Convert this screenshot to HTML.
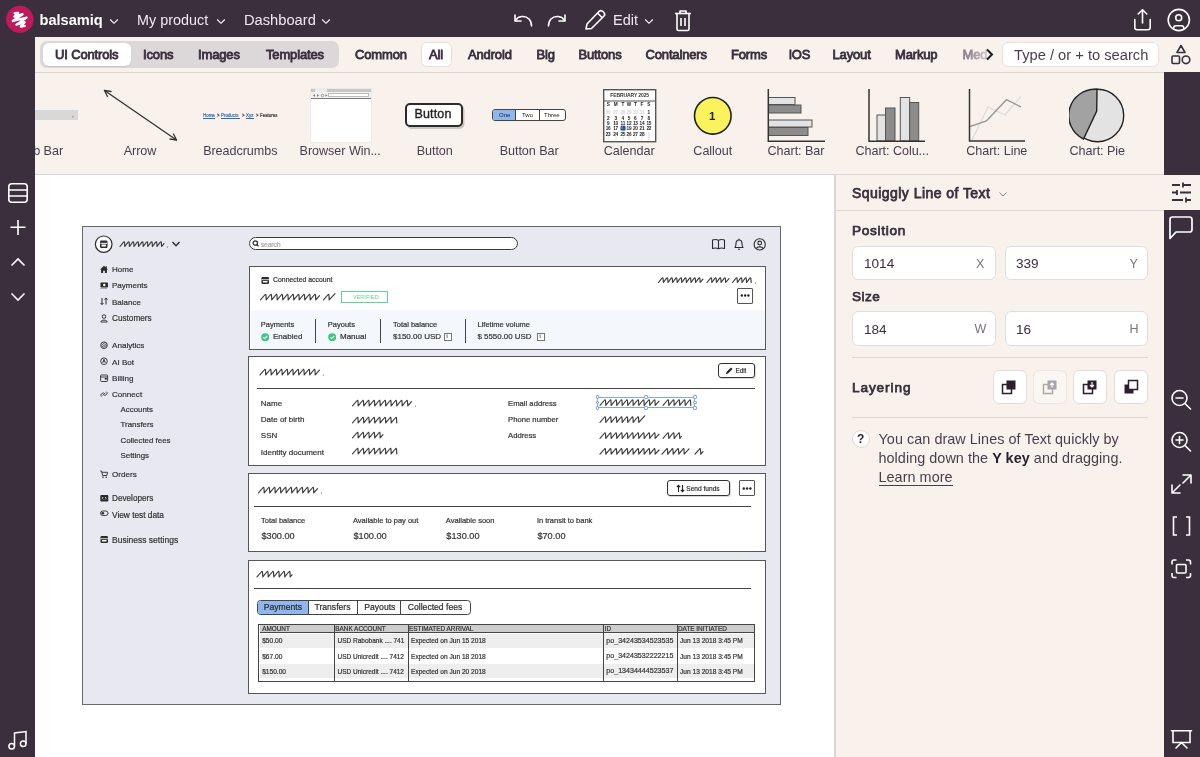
<!DOCTYPE html>
<html><head><meta charset="utf-8">
<style>
*{margin:0;padding:0;box-sizing:border-box}
html,body{width:1200px;height:757px;overflow:hidden;background:#fff;font-family:"Liberation Sans",sans-serif}
.a{position:absolute}
.t{position:absolute;white-space:nowrap;line-height:1}
#top{left:0;top:0;width:1200px;height:37px;background:#3b2e3d}
#lside{left:0;top:37px;width:35px;height:720px;background:#3b2e3d}
#rside{left:1164px;top:72px;width:36px;height:685px;background:#3b2e3d}
#tools{left:35px;top:37px;width:1165px;height:36px;background:#f9f2ec;border-bottom:1px solid #dcd6d6}
#lib{left:35px;top:73px;width:1129px;height:102px;background:#f9f2ec;border-bottom:1px solid #dcd6d6}
#canvas{left:35px;top:175px;width:799px;height:582px;background:#fff}
#panel{left:834px;top:175px;width:330px;height:582px;background:#f9f2ec;border-left:2px solid #dcd4dc}
.wt{color:#fff}
.tb{color:#3b2e3d;font-weight:normal;font-size:13px;letter-spacing:-0.15px;-webkit-text-stroke:0.8px #3b2e3d}
.lbl{color:#4a3c4d;font-size:12.6px;letter-spacing:-0.05px}
.inp{position:absolute;background:#fff;border:1px solid #e4dcdc;border-radius:6px}
.lb{position:absolute;background:#fff;border:1px solid #e4dcdc;border-radius:6px;width:34px;height:34px}
.sep{position:absolute;height:1px;background:#ddd6d6}
.w{position:absolute;white-space:nowrap;line-height:1;-webkit-text-stroke:0.2px currentColor}
</style></head><body><div id="root" style="position:absolute;left:0;top:0;width:1200px;height:757px;will-change:transform">
<div id="top" class="a"></div>
<div id="lside" class="a"></div>
<div id="tools" class="a"></div>
<div id="lib" class="a"></div>
<div id="rside" class="a"></div>
<div id="canvas" class="a"></div>
<div id="panel" class="a"></div>

<!-- TOPBAR -->
<svg class="a" style="left:0;top:0" width="40" height="40" viewBox="0 0 40 40"><circle cx="19.8" cy="19.4" r="13.7" fill="#be1a5c"/><path d="M14.6 13.2 L18.2 12.8 L14.4 16.6 L22.6 14.2 L12.8 21 L26.6 17.6 L16.4 24.6 L24.6 22.2 L20.8 26.6 L24.8 25.8" stroke="#fff" stroke-width="2.3" fill="none" stroke-linecap="round" stroke-linejoin="round"/></svg>
<div class="t wt" style="left:39.5px;top:12.8px;font-size:14.6px;font-weight:bold">balsamiq</div>
<svg class="a" style="left:109px;top:18px" width="10" height="7" viewBox="0 0 10 7"><path d="M1.2 1.5 L5 5.3 L8.8 1.5" stroke="#fff" stroke-width="1.1" fill="none"/></svg>
<div class="t wt" style="left:137px;top:13px;font-size:14.4px;color:#efe9ee">My product</div>
<svg class="a" style="left:216px;top:18px" width="10" height="7" viewBox="0 0 10 7"><path d="M1.2 1.5 L5 5.3 L8.8 1.5" stroke="#fff" stroke-width="1.1" fill="none"/></svg>
<div class="t wt" style="left:244px;top:12.8px;font-size:14.7px;color:#efe9ee">Dashboard</div>
<svg class="a" style="left:321px;top:18px" width="10" height="7" viewBox="0 0 10 7"><path d="M1.2 1.5 L5 5.3 L8.8 1.5" stroke="#fff" stroke-width="1.1" fill="none"/></svg>

<!-- undo/redo/edit/trash -->
<svg class="a" style="left:511.5px;top:10.5px" width="22" height="20" viewBox="0 0 22 20"><g stroke="#fff" stroke-width="1.6" fill="none" stroke-linecap="round" stroke-linejoin="round"><path d="M3 4 L3 10 L9 10"/><path d="M3.5 9.5 C6 5 13 4 17 8 C19 10 19.5 12 19.5 15"/></g></svg>
<svg class="a" style="left:546px;top:10.5px" width="22" height="20" viewBox="0 0 22 20"><g stroke="#fff" stroke-width="1.6" fill="none" stroke-linecap="round" stroke-linejoin="round"><path d="M19 4 L19 10 L13 10"/><path d="M18.5 9.5 C16 5 9 4 5 8 C3 10 2.5 12 2.5 15"/></g></svg>
<svg class="a" style="left:583px;top:8px" width="24" height="24" viewBox="0 0 24 24"><g stroke="#fff" stroke-width="1.6" fill="none" stroke-linejoin="round"><path d="M3 21 L4 16 L16 3.5 C17 2.5 19 2.5 20.5 4 C22 5.5 22 7 21 8 L8.5 20.5 Z"/><path d="M14.5 5 L19.5 10"/></g></svg>
<div class="t wt" style="left:613px;top:13px;font-size:14.5px;color:#efe9ee">Edit</div>
<svg class="a" style="left:644px;top:18px" width="10" height="7" viewBox="0 0 10 7"><path d="M1.2 1.5 L5 5.3 L8.8 1.5" stroke="#fff" stroke-width="1.1" fill="none"/></svg>
<svg class="a" style="left:673px;top:8px" width="20" height="24" viewBox="0 0 20 24"><g stroke="#fff" stroke-width="1.6" fill="none" stroke-linejoin="round"><path d="M2 5.5 H18"/><path d="M7 5.5 V3 H13 V5.5"/><path d="M4 5.5 V21 C4 22 4.5 22.5 5.5 22.5 H14.5 C15.5 22.5 16 22 16 21 V5.5"/><path d="M8 10 V18 M12 10 V18"/></g></svg>
<!-- share, account -->
<svg class="a" style="left:1131px;top:7px" width="22" height="24" viewBox="0 0 22 24"><g stroke="#fff" stroke-width="1.6" fill="none" stroke-linecap="round" stroke-linejoin="round"><path d="M11.5 3 V16"/><path d="M7.2 7 L11.5 2.8 L15.8 7"/><path d="M3.8 12.5 V20.5 Q3.8 22.7 6 22.7 H17 Q19.2 22.7 19.2 20.5 V12.5"/></g></svg>
<svg class="a" style="left:1167px;top:8px" width="24" height="24" viewBox="0 0 24 24"><defs><clipPath id="acc"><circle cx="11.8" cy="12" r="10.6"/></clipPath></defs><g stroke="#fff" stroke-width="1.6" fill="none"><circle cx="11.8" cy="12" r="10.6"/><circle cx="11.7" cy="9.7" r="3"/><rect x="6.6" y="17.8" width="10.2" height="5" rx="2.3" clip-path="url(#acc)"/></g></svg>

<!-- TOOLBAR -->
<div class="a" style="left:39.5px;top:41px;width:299px;height:26.5px;background:#dcd7d9;border-radius:7px"></div>
<div class="a" style="left:43px;top:43px;width:88px;height:23px;background:#fff;border-radius:6px;box-shadow:0 1px 1px rgba(0,0,0,0.08)"></div>
<div class="t tb" style="left:55px;top:48px">UI Controls</div>
<div class="t tb" style="left:143px;top:48px">Icons</div>
<div class="t tb" style="left:198px;top:48px">Images</div>
<div class="t tb" style="left:266px;top:48px">Templates</div>
<div class="t tb" style="left:355px;top:48px">Common</div>
<div class="a" style="left:421px;top:41.5px;width:31px;height:25.5px;background:#fff;border:1px solid #e6dede;border-radius:6px"></div>
<div class="t tb" style="left:429px;top:48px">All</div>
<div class="t tb" style="left:468px;top:48px">Android</div>
<div class="t tb" style="left:536.5px;top:48px">Big</div>
<div class="t tb" style="left:578.5px;top:48px">Buttons</div>
<div class="t tb" style="left:645.5px;top:48px">Containers</div>
<div class="t tb" style="left:731px;top:48px">Forms</div>
<div class="t tb" style="left:789px;top:48px">iOS</div>
<div class="t tb" style="left:832.5px;top:48px">Layout</div>
<div class="t tb" style="left:895px;top:48px">Markup</div>
<div class="t tb" style="left:962.5px;top:48px;color:#8f8790;-webkit-text-stroke-color:#8f8790;-webkit-mask-image:linear-gradient(to right,#000 30%,rgba(0,0,0,0.35) 100%)">Med</div>
<svg class="a" style="left:984.5px;top:48px" width="9" height="13" viewBox="0 0 9 13"><path d="M2 1.5 L7 6.5 L2 11.5" stroke="#1a1a1a" stroke-width="2" fill="none"/></svg>
<div class="a" style="left:1001.5px;top:42px;width:157.5px;height:25px;background:#fff;border:1px solid #e8e0e0;border-radius:6px"></div>
<div class="t" style="left:1014px;top:47.6px;font-size:14.7px;color:#4b3d4e">Type / or + to search</div>
<svg class="a" style="left:1170px;top:44px" width="22" height="21" viewBox="0 0 22 21"><g stroke="#3b2e3d" stroke-width="1.6" fill="none" stroke-linejoin="round"><path d="M11 1.5 L15 8.5 H7 Z"/><rect x="2" y="12" width="7.5" height="7.5" rx="1"/><circle cx="16" cy="15.8" r="3.8"/></g></svg>

<!-- LIBRARY -->
<div class="a" style="left:35px;top:73px;width:1129px;height:100px;overflow:hidden">
 <div class="a" style="left:-10px;top:37px;width:53px;height:10px;background:#d9d8d8"></div>
 <div class="t" style="left:37px;top:39.5px;font-size:6px;color:#666">‹</div>
 <div class="t lbl" style="left:-15px;top:72px">Tab Bar</div>
</div>
<svg class="a" style="left:100px;top:86px" width="82" height="58" viewBox="0 0 82 58"><g stroke="#333" stroke-width="1.3" fill="none" stroke-linecap="round"><path d="M4.5 4.5 L76.5 54"/><path d="M4.5 4.5 L11 5.5 M4.5 4.5 L7.5 10.5"/><path d="M76.5 54 L70 53 M76.5 54 L73.5 48"/></g></svg>
<div class="t lbl" style="left:70.0px;top:145px;width:140px;text-align:center">Arrow</div>
<div class="t" style="left:203.1px;top:112.8px;transform:scaleX(0.82);transform-origin:0 0;width:11.8px;font-size:5.3px;color:#2e6ab5;-webkit-text-stroke:0.2px #2e6ab5;letter-spacing:0.05px">Home</div><div class="a" style="left:203.1px;top:117.6px;width:11.8px;height:0.7px;background:#2e6ab5"></div><div class="t" style="left:216.8px;top:112.8px;transform:scaleX(0.82);transform-origin:0 0;width:4px;font-size:5.3px;color:#333;-webkit-text-stroke:0.2px #333;letter-spacing:0.05px">&gt;</div><div class="t" style="left:220.9px;top:112.8px;transform:scaleX(0.82);transform-origin:0 0;width:18.7px;font-size:5.3px;color:#2e6ab5;-webkit-text-stroke:0.2px #2e6ab5;letter-spacing:0.05px">Products</div><div class="a" style="left:220.9px;top:117.6px;width:18.7px;height:0.7px;background:#2e6ab5"></div><div class="t" style="left:242px;top:112.8px;transform:scaleX(0.82);transform-origin:0 0;width:4px;font-size:5.3px;color:#333;-webkit-text-stroke:0.2px #333;letter-spacing:0.05px">&gt;</div><div class="t" style="left:245.6px;top:112.8px;transform:scaleX(0.82);transform-origin:0 0;width:8px;font-size:5.3px;color:#2e6ab5;-webkit-text-stroke:0.2px #2e6ab5;letter-spacing:0.05px">Xyz</div><div class="a" style="left:245.6px;top:117.6px;width:8px;height:0.7px;background:#2e6ab5"></div><div class="t" style="left:255.8px;top:112.8px;transform:scaleX(0.82);transform-origin:0 0;width:4px;font-size:5.3px;color:#333;-webkit-text-stroke:0.2px #333;letter-spacing:0.05px">&gt;</div><div class="t" style="left:259.5px;top:112.8px;transform:scaleX(0.82);transform-origin:0 0;width:20px;font-size:5.3px;color:#333;-webkit-text-stroke:0.2px #333;letter-spacing:0.05px">Features</div>
<div class="t lbl" style="left:170.3px;top:145px;width:140px;text-align:center">Breadcrumbs</div>
<div class="a" style="left:311px;top:88.7px;width:60px;height:53.7px;background:#fff;box-shadow:0 0 0 0.5px #e4e0dc"></div>
<div class="a" style="left:311px;top:88.7px;width:60px;height:3.6px;background:#c6c6c6"></div>
<div class="a" style="left:315px;top:89.2px;width:11.5px;height:3.1px;background:#ececec"></div>
<div class="a" style="left:311px;top:92.3px;width:60px;height:6px;background:#f1f1f1"></div>
<div class="a" style="left:327.5px;top:93.2px;width:41.5px;height:4px;background:#fff;border:0.6px solid #bbb"></div>
<svg class="a" style="left:312px;top:93px" width="16" height="5" viewBox="0 0 16 5"><g fill="#777"><path d="M1 2.5 L3 1 V4 Z"/><path d="M7 2.5 L5 1 V4 Z"/><circle cx="10.5" cy="2.5" r="1.3" fill="none" stroke="#777" stroke-width="0.6"/><path d="M13.5 1.2 L15.5 2.5 L13.5 3.8 Z"/></g></svg>
<div class="a" style="left:311px;top:98.2px;width:60px;height:0.9px;background:#7a7a7a"></div>
<div class="t lbl" style="left:270.2px;top:145px;width:140px;text-align:center">Browser Win...</div>
<div class="a" style="left:405px;top:103px;width:57.5px;height:23.5px;background:#fff;border:2px solid #2b2b2b;border-radius:5px;box-shadow:1.5px 2px 0 rgba(0,0,0,0.18)"></div>
<div class="t" style="left:414.5px;top:107.8px;font-size:12.5px;color:#222;letter-spacing:0.15px;-webkit-text-stroke:0.35px #222">Button</div>
<div class="t lbl" style="left:364.7px;top:145px;width:140px;text-align:center">Button</div>
<div class="a" style="left:492px;top:109px;width:73.5px;height:12px;background:#fff;border:1px solid #444;border-radius:3px;overflow:hidden">
 <div class="a" style="left:0;top:0;width:23px;height:10px;background:#8fb6ee;border-right:1px solid #444"></div>
 <div class="a" style="left:45.5px;top:0;width:1px;height:10px;background:#444"></div>
 <div class="t" style="left:6px;top:2px;font-size:6px;color:#222">One</div>
 <div class="t" style="left:29px;top:2px;font-size:6px;color:#222">Two</div>
 <div class="t" style="left:51px;top:2px;font-size:6px;color:#222">Three</div>
</div>
<div class="t lbl" style="left:459.2px;top:145px;width:140px;text-align:center">Button Bar</div>
<svg class="a" style="left:603px;top:88.5px" width="54" height="54" viewBox="0 0 54 54"><rect x="0.7" y="0.7" width="52" height="52" fill="#fff" stroke="#555" stroke-width="1.4"/><path d="M0.7 12 H52.7" stroke="#555" stroke-width="1.2"/><text x="26.7" y="8.2" font-size="5" text-anchor="middle" fill="#333" font-family="Liberation Sans" font-weight="bold" letter-spacing="-0.1">FEBRUARY 2025</text><g font-size="4.7" fill="#222" font-family="Liberation Sans" font-weight="bold" text-anchor="middle" letter-spacing="-0.2"><text x="5.1" y="17">S</text><text x="12.6" y="17">M</text><text x="19.8" y="17">T</text><text x="25.9" y="17">W</text><text x="32.3" y="17">T</text><text x="38.9" y="17">F</text><text x="45.8" y="17">S</text><text x="5.1" y="25.3" fill="#d4d4d4">26</text><text x="12.6" y="25.3" fill="#d4d4d4">27</text><text x="19.8" y="25.3" fill="#d4d4d4">28</text><text x="25.9" y="25.3" fill="#d4d4d4">29</text><text x="32.3" y="25.3" fill="#d4d4d4">30</text><text x="38.9" y="25.3" fill="#d4d4d4">31</text><text x="45.8" y="25.3">1</text><text x="5.1" y="30.8">2</text><text x="12.6" y="30.8">3</text><text x="19.8" y="30.8">4</text><text x="25.9" y="30.8">5</text><text x="32.3" y="30.8">6</text><text x="38.9" y="30.8">7</text><text x="45.8" y="30.8">8</text><text x="5.1" y="36.1">9</text><text x="12.6" y="36.1">10</text><text x="19.8" y="36.1">11</text><text x="25.9" y="36.1">12</text><text x="32.3" y="36.1">13</text><text x="38.9" y="36.1">14</text><text x="45.8" y="36.1">15</text><circle cx="20.1" cy="39.3" r="3.1" fill="#7aa8e6"/><text x="5.1" y="41.1">16</text><text x="12.6" y="41.1">17</text><text x="19.8" y="41.1">18</text><text x="25.9" y="41.1">19</text><text x="32.3" y="41.1">20</text><text x="38.9" y="41.1">21</text><text x="45.8" y="41.1">22</text><text x="5.1" y="46.5">23</text><text x="12.6" y="46.5">24</text><text x="19.8" y="46.5">25</text><text x="25.9" y="46.5">26</text><text x="32.3" y="46.5">27</text><text x="38.9" y="46.5">28</text><text x="45.8" y="46.5" fill="#d4d4d4">1</text><text x="5.1" y="51" fill="#e6e6e6">2</text><text x="12.6" y="51" fill="#e6e6e6">3</text><text x="19.8" y="51" fill="#e6e6e6">4</text><text x="25.9" y="51" fill="#e6e6e6">5</text><text x="32.3" y="51" fill="#e6e6e6">6</text><text x="38.9" y="51" fill="#e6e6e6">7</text><text x="45.8" y="51" fill="#e6e6e6">8</text></g></svg>
<div class="t lbl" style="left:559.2px;top:145px;width:140px;text-align:center">Calendar</div>
<svg class="a" style="left:692px;top:95px" width="42" height="42" viewBox="0 0 42 42"><circle cx="20.8" cy="20.8" r="18.3" fill="#fbf35b" stroke="#222" stroke-width="1.6"/><text x="20.3" y="25" font-size="11.5" text-anchor="middle" fill="#222" font-family="Liberation Sans" font-weight="bold">1</text></svg>
<div class="t lbl" style="left:642.8px;top:145px;width:140px;text-align:center">Callout</div>
<svg class="a" style="left:766px;top:88px" width="62" height="56" viewBox="0 0 62 56"><g stroke="#555" stroke-width="1">
<rect x="2.5" y="9.5" width="26.5" height="7" fill="#e3e3e3"/>
<rect x="2.5" y="17" width="32.5" height="8" fill="#8c8c8c"/>
<rect x="2.5" y="32" width="43.5" height="7" fill="#e3e3e3"/>
<rect x="2.5" y="39.5" width="39.5" height="8" fill="#8c8c8c"/></g>
<path d="M2.3 1 V53.3 H59" stroke="#333" stroke-width="1.5" fill="none"/></svg>
<div class="t lbl" style="left:726.0px;top:145px;width:140px;text-align:center">Chart: Bar</div>
<svg class="a" style="left:866px;top:88px" width="62" height="56" viewBox="0 0 62 56"><g stroke="#555" stroke-width="1">
<rect x="11" y="27" width="8.5" height="26" fill="#e3e3e3"/>
<rect x="19.5" y="20" width="9.5" height="33" fill="#8c8c8c"/>
<rect x="34.3" y="9.5" width="9.4" height="43.5" fill="#e3e3e3"/>
<rect x="43.7" y="14.5" width="9" height="38.5" fill="#8c8c8c"/></g>
<path d="M3 1 V53.3 H59" stroke="#333" stroke-width="1.5" fill="none"/></svg>
<div class="t lbl" style="left:822.2px;top:145px;width:140px;text-align:center">Chart: Colu...</div>
<svg class="a" style="left:966px;top:88px" width="62" height="56" viewBox="0 0 62 56">
<path d="M6 52 L22 19 L39 27 L55 8.5" stroke="#dcdcdc" stroke-width="1.3" fill="none"/>
<path d="M4 38.5 L20.5 32.8 L40.5 11.7 L55 19" stroke="#9a9a9a" stroke-width="1.4" fill="none"/>
<path d="M3.5 1 V53 H59" stroke="#333" stroke-width="1.5" fill="none"/></svg>
<div class="t lbl" style="left:926.8px;top:145px;width:140px;text-align:center">Chart: Line</div>
<svg class="a" style="left:1069px;top:87px" width="57" height="57" viewBox="0 0 57 57"><circle cx="28.5" cy="28.5" r="26.2" fill="#e3e3e3" stroke="#222" stroke-width="1.4"/><path d="M28 2.3 L27.7 24 L14.5 52 A26.2 26.2 0 0 1 28 2.3 Z" fill="#a2a2a2" stroke="#222" stroke-width="1.4"/></svg>
<div class="t lbl" style="left:1027.3px;top:145px;width:140px;text-align:center">Chart: Pie</div>

<!-- PANEL -->
<div class="a" style="left:1164px;top:175px;width:36px;height:35px;background:#f9f2ec"></div>
<div class="sep" style="left:836px;top:209.5px;width:328px"></div>
<div class="t" style="left:852px;top:185.8px;font-size:14px;color:#3b2e3d;letter-spacing:0.45px;-webkit-text-stroke:0.75px #3b2e3d">Squiggly Line of Text</div>
<svg class="a" style="left:998px;top:190px" width="10" height="8" viewBox="0 0 10 8"><path d="M1.5 2.5 L5 6 L8.5 2.5" stroke="#8a8089" stroke-width="1" fill="none"/></svg>
<div class="t" style="left:852px;top:224px;font-size:13.6px;color:#3b2e3d;letter-spacing:0.7px;-webkit-text-stroke:0.75px #3b2e3d">Position</div>
<div class="inp" style="left:851.5px;top:245.5px;width:144px;height:34.5px"></div>
<div class="inp" style="left:1004.5px;top:245.5px;width:143.5px;height:34.5px"></div>
<div class="t" style="left:864px;top:257px;font-size:13.6px;color:#3b2e3d">1014</div>
<div class="t" style="left:976px;top:257.5px;font-size:12.5px;color:#7b707c">X</div>
<div class="t" style="left:1016px;top:257px;font-size:13.6px;color:#3b2e3d">339</div>
<div class="t" style="left:1129.5px;top:257.5px;font-size:12.5px;color:#7b707c">Y</div>
<div class="t" style="left:852px;top:289.8px;font-size:13.6px;color:#3b2e3d;letter-spacing:0.45px;-webkit-text-stroke:0.75px #3b2e3d">Size</div>
<div class="inp" style="left:851.5px;top:311px;width:144px;height:34.5px"></div>
<div class="inp" style="left:1004.5px;top:311px;width:143.5px;height:34.5px"></div>
<div class="t" style="left:864px;top:322.8px;font-size:13.6px;color:#3b2e3d">184</div>
<div class="t" style="left:974.5px;top:323px;font-size:12.5px;color:#7b707c">W</div>
<div class="t" style="left:1016px;top:322.8px;font-size:13.6px;color:#3b2e3d">16</div>
<div class="t" style="left:1129.5px;top:323px;font-size:12.5px;color:#7b707c">H</div>
<div class="sep" style="left:851.5px;top:357px;width:296.5px"></div>
<div class="t" style="left:852px;top:380.8px;font-size:13.6px;color:#3b2e3d;letter-spacing:0.9px;-webkit-text-stroke:0.75px #3b2e3d">Layering</div>
<div class="lb" style="left:992.5px;top:370.3px"></div>
<div class="lb" style="left:1033.3px;top:370.3px;background:#faf6f2;border-color:#ece6e4"></div>
<div class="lb" style="left:1073.3px;top:370.3px"></div>
<div class="lb" style="left:1114.2px;top:370.3px"></div>
<svg class="a" style="left:1001px;top:379px" width="17" height="17" viewBox="0 0 17 17"><rect x="1.5" y="5.5" width="9" height="9" fill="#fff" stroke="#2a1f2c" stroke-width="1.5"/><rect x="5.5" y="1.5" width="9" height="9" fill="#2a1f2c"/></svg>
<svg class="a" style="left:1041.5px;top:379px" width="17" height="17" viewBox="0 0 17 17"><rect x="1.5" y="5.5" width="9" height="9" fill="none" stroke="#aaa" stroke-width="1.5"/><rect x="5.5" y="1.5" width="9" height="9" fill="#a8a4a8"/><path d="M10 8.5 V4 M8 6 L10 4 L12 6" stroke="#fff" stroke-width="1.2" fill="none"/></svg>
<svg class="a" style="left:1082px;top:379px" width="17" height="17" viewBox="0 0 17 17"><rect x="1.5" y="5.5" width="9" height="9" fill="#fff" stroke="#2a1f2c" stroke-width="1.5"/><rect x="5.5" y="1.5" width="9" height="9" fill="#2a1f2c"/><path d="M10 3 V8 M8 6 L10 8 L12 6" stroke="#fff" stroke-width="1.2" fill="none"/></svg>
<svg class="a" style="left:1122.5px;top:379px" width="17" height="17" viewBox="0 0 17 17"><rect x="1.5" y="5.5" width="9" height="9" fill="#2a1f2c"/><rect x="5.5" y="1.5" width="9" height="9" fill="#fff" stroke="#2a1f2c" stroke-width="1.5"/></svg>
<div class="sep" style="left:851.5px;top:416.5px;width:296.5px"></div>
<div class="a" style="left:851.5px;top:429.5px;width:18.5px;height:18.5px;border-radius:50%;background:#fff;border:1px solid #e0d8d8"></div>
<div class="t" style="left:857px;top:433px;font-size:12px;font-weight:bold;color:#2a1f2c">?</div>
<div class="a" style="left:878.5px;top:429.5px;width:270px;font-size:14.4px;line-height:19.3px;color:#4b3d4e;letter-spacing:0.05px">You can draw Lines of Text quickly by<br>holding down the <b style="color:#2a1f2c">Y key</b> and dragging.<br><span style="border-bottom:1.5px solid #4b3d4e">Learn more</span></div>

<!-- RIGHT SIDE ICONS -->
<svg class="a" style="left:1170px;top:181px" width="23" height="23" viewBox="0 0 23 23"><g stroke="#3b2e3d" stroke-width="1.8"><path d="M2 4 H10 M13 4 H21 M13 1.5 V6.5"/><path d="M2 11.5 H7 M10 11.5 H21 M7 9 V14"/><path d="M2 19 H13 M16 19 H21 M16 16.5 V21.5"/></g></svg>
<svg class="a" style="left:1168px;top:215px" width="26" height="26" viewBox="0 0 26 26"><path d="M4.5 2 H21.5 Q24 2 24 4.5 V14.5 Q24 17 21.5 17 H8 L2 23.5 V4.5 Q2 2 4.5 2 Z" stroke="#fff" stroke-width="1.7" fill="none" stroke-linejoin="round"/></svg>
<svg class="a" style="left:1170px;top:389px" width="23" height="21" viewBox="0 0 23 21"><g stroke="#fff" stroke-width="1.6" fill="none" stroke-linecap="round"><circle cx="9.5" cy="9" r="7.5"/><path d="M15 14.5 L20.5 20"/><path d="M6 9 H13"/></g></svg>
<svg class="a" style="left:1170px;top:431px" width="23" height="21" viewBox="0 0 23 21"><g stroke="#fff" stroke-width="1.6" fill="none" stroke-linecap="round"><circle cx="9.5" cy="9" r="7.5"/><path d="M15 14.5 L20.5 20"/><path d="M6 9 H13 M9.5 5.5 V12.5"/></g></svg>
<svg class="a" style="left:1170px;top:473px" width="23" height="22" viewBox="0 0 23 22"><g stroke="#fff" stroke-width="1.6" fill="none" stroke-linecap="round" stroke-linejoin="round"><path d="M13 2 H21 V10 M21 2 L13 10"/><path d="M2 12 V20 H10 M2 20 L10 12"/></g></svg>
<svg class="a" style="left:1171px;top:515px" width="21" height="22" viewBox="0 0 21 22"><g stroke="#fff" stroke-width="1.6" fill="none"><path d="M6 2 H2.5 V20 H6"/><path d="M15 2 H18.5 V20 H15"/></g></svg>
<svg class="a" style="left:1170px;top:558px" width="23" height="22" viewBox="0 0 23 22"><g stroke="#fff" stroke-width="1.6" fill="none"><path d="M2 6.5 V4 C2 2.8 2.8 2 4 2 H6.5 M16 2 H18.5 C19.7 2 20.5 2.8 20.5 4 V6.5 M20.5 15 V17.5 C20.5 18.7 19.7 19.5 18.5 19.5 H16 M6.5 19.5 H4 C2.8 19.5 2 18.7 2 17.5 V15"/><rect x="6.5" y="6.5" width="9.5" height="8.5" rx="1"/></g></svg>
<svg class="a" style="left:1170px;top:729px" width="23" height="22" viewBox="0 0 23 22"><g stroke="#fff" stroke-width="1.6" fill="none" stroke-linecap="round"><path d="M1.5 1.8 H21.5"/><path d="M3 1.8 V13.5 H20 V1.8"/><path d="M11.5 13.5 L6 19 M11.5 13.5 L17 19"/></g></svg>
<!-- LEFT SIDE ICONS -->
<svg class="a" style="left:7px;top:182px" width="22" height="22" viewBox="0 0 22 22"><g stroke="#fff" stroke-width="1.6" fill="none"><rect x="1.8" y="1.8" width="18.4" height="18.4" rx="3"/><path d="M1.8 8 H20.2 M1.8 14 H20.2"/></g></svg>
<svg class="a" style="left:9px;top:219px" width="18" height="17" viewBox="0 0 18 17"><g stroke="#fff" stroke-width="1.6"><path d="M1.5 8.3 H16.5 M9 1 V16"/></g></svg>
<svg class="a" style="left:10px;top:257px" width="16" height="10" viewBox="0 0 16 10"><path d="M1.5 8.5 L8 2 L14.5 8.5" stroke="#fff" stroke-width="1.6" fill="none"/></svg>
<svg class="a" style="left:10px;top:292px" width="16" height="10" viewBox="0 0 16 10"><path d="M1.5 1.5 L8 8 L14.5 1.5" stroke="#fff" stroke-width="1.6" fill="none"/></svg>
<svg class="a" style="left:7px;top:729px" width="22" height="22" viewBox="0 0 22 22"><g stroke="#fff" stroke-width="1.5" fill="none"><path d="M7.5 17 V4 L19 2.5 V14.5"/><circle cx="4.7" cy="17.2" r="2.8"/><circle cx="16.2" cy="14.7" r="2.8"/></g></svg>









<!-- WIREFRAME -->
<div class="a" style="left:82px;top:226px;width:698.5px;height:479px;background:#e8e8f1;border:1.5px solid #686868"></div>
<svg class="a" style="left:94px;top:235px" width="20" height="19" viewBox="0 0 20 19"><ellipse cx="9.7" cy="9.2" rx="8.3" ry="8.2" fill="#fff" stroke="#2b2b2b" stroke-width="1.2"/><rect x="6" y="5.5" width="7.5" height="7.5" rx="1.2" fill="#2b2b2b"/><path d="M6.5 8.3 H13" stroke="#fff" stroke-width="1"/><rect x="7.5" y="9.5" width="4.5" height="2" fill="#fff"/></svg>
<svg class="a" style="left:171px;top:240px" width="10" height="8" viewBox="0 0 10 8"><path d="M1.5 2 L5 5.8 L8.5 2" stroke="#2b2b2b" stroke-width="1.4" fill="none"/></svg>
<div class="a" style="left:249.2px;top:237px;width:268.5px;height:13.3px;background:#fff;border:1.1px solid #3a3a3a;border-radius:7px"></div>
<svg class="a" style="left:251.5px;top:240.3px" width="8" height="8" viewBox="0 0 8 8"><circle cx="3.3" cy="3" r="2.2" stroke="#333" stroke-width="1.3" fill="none"/><path d="M4.8 4.6 L6.6 6.3" stroke="#333" stroke-width="1.3"/></svg>
<div class="w" style="left:260.8px;top:240.7px;font-size:7px;color:#a8a8a8;letter-spacing:-0.25px">search</div>
<svg class="a" style="left:711px;top:238px" width="15" height="12" viewBox="0 0 15 12"><g stroke="#2b2b2b" stroke-width="1.1" fill="none" stroke-linejoin="round"><path d="M1.5 2 C3.5 1.3 5.5 1.3 7.5 2.3 C9.5 1.3 11.5 1.3 13.5 2 V10.5 C11.5 9.8 9.5 9.8 7.5 10.7 C5.5 9.8 3.5 9.8 1.5 10.5 Z"/><path d="M7.5 2.3 V10.7"/></g></svg>
<svg class="a" style="left:732.5px;top:238px" width="12" height="13" viewBox="0 0 12 13"><g stroke="#2b2b2b" stroke-width="1.1" fill="none" stroke-linejoin="round"><path d="M2 9.5 C3 8.5 3 7.5 3 5.5 C3 3.3 4.3 2 6 2 C7.7 2 9 3.3 9 5.5 C9 7.5 9 8.5 10 9.5 Z"/><path d="M5 11.2 H7"/><path d="M6 0.8 V2"/></g></svg>
<svg class="a" style="left:752.5px;top:238px" width="14" height="13" viewBox="0 0 14 13"><g stroke="#2b2b2b" stroke-width="1.1" fill="none"><circle cx="6.7" cy="6.4" r="5.6"/><circle cx="6.7" cy="5" r="1.9"/><path d="M3.3 10.5 C4.3 8.3 9.1 8.3 10.1 10.5"/></g></svg>
<div class="w" style="left:112.0px;top:266.2px;font-size:8px;color:#333;">Home</div>
<svg class="a" style="left:99.5px;top:264.9px" width="9" height="9" viewBox="0 0 9 9"><path d="M0 4.6 L4 0.8 L8 4.6 H6.9 V8 H4.9 V5.8 H3.1 V8 H1.1 V4.6 Z" fill="#2b2b2b"/><rect x="5.6" y="1.2" width="1.2" height="2.2" fill="#2b2b2b"/></svg>
<div class="w" style="left:112.0px;top:282.3px;font-size:8px;color:#333;">Payments</div>
<svg class="a" style="left:99.5px;top:281.0px" width="9" height="9" viewBox="0 0 9 9"><rect x="0.5" y="1.5" width="7.5" height="5" rx="0.8" fill="#2b2b2b"/><circle cx="4.3" cy="4" r="1.2" fill="#fff"/><path d="M0 7.5 H7" stroke="#999" stroke-width="0.8"/></svg>
<div class="w" style="left:112.0px;top:298.5px;font-size:8px;color:#333;">Balance</div>
<svg class="a" style="left:99.5px;top:297.2px" width="9" height="9" viewBox="0 0 9 9"><path d="M2 1 V7.5 M0.5 6 L2 7.5 L3.5 6 M6 7.5 V1 M4.5 2.5 L6 1 L7.5 2.5" stroke="#2b2b2b" stroke-width="1" fill="none"/></svg>
<div class="w" style="left:112.0px;top:314.7px;font-size:8.2px;color:#333;">Customers</div>
<svg class="a" style="left:99.5px;top:313.5px" width="9" height="9" viewBox="0 0 9 9"><circle cx="4" cy="2.6" r="1.8" stroke="#2b2b2b" stroke-width="0.9" fill="none"/><path d="M0.8 8 C0.8 5.5 7.2 5.5 7.2 8 Z" stroke="#2b2b2b" stroke-width="0.9" fill="none"/></svg>
<div class="w" style="left:112.0px;top:342.2px;font-size:8.1px;color:#333;">Analytics</div>
<svg class="a" style="left:99.5px;top:341.0px" width="9" height="9" viewBox="0 0 9 9"><circle cx="4" cy="4.2" r="3.3" stroke="#2b2b2b" stroke-width="0.9" fill="none"/><path d="M2 6 L6.5 2.5 M3.5 6.5 L7 4 M1.5 4.5 L5 1.5" stroke="#2b2b2b" stroke-width="0.8"/></svg>
<div class="w" style="left:112.0px;top:358.6px;font-size:8.1px;color:#333;">AI Bot</div>
<svg class="a" style="left:99.5px;top:357.4px" width="9" height="9" viewBox="0 0 9 9"><circle cx="4" cy="4.2" r="3.3" stroke="#2b2b2b" stroke-width="0.9" fill="none"/><path d="M2.6 5.8 L4 2.3 L5.4 5.8 M3.1 4.6 H4.9" stroke="#2b2b2b" stroke-width="0.8" fill="none"/></svg>
<div class="w" style="left:112.0px;top:375.2px;font-size:8.1px;color:#333;">Billing</div>
<svg class="a" style="left:99.5px;top:374.0px" width="9" height="9" viewBox="0 0 9 9"><rect x="0.6" y="1" width="7" height="6.5" rx="0.8" stroke="#2b2b2b" stroke-width="0.9" fill="none"/><path d="M0.6 3 H7.6" stroke="#2b2b2b" stroke-width="0.9"/><rect x="4.8" y="4" width="2" height="1.6" fill="#2b2b2b"/></svg>
<div class="w" style="left:112.0px;top:391.4px;font-size:8.1px;color:#333;">Connect</div>
<svg class="a" style="left:99.5px;top:390.2px" width="9" height="9" viewBox="0 0 9 9"><path d="M1.5 6.5 C0.3 5.3 1 3.8 2.3 3.3 L3.8 2.8 M6.5 1.8 C7.7 3 7 4.5 5.7 5 L4.2 5.5 M2.8 5.5 L5.2 2.8" stroke="#2b2b2b" stroke-width="0.9" fill="none"/></svg>
<div class="w" style="left:120.5px;top:406.3px;font-size:7.9px;color:#333;">Accounts</div>
<div class="w" style="left:120.5px;top:421.3px;font-size:7.9px;color:#333;">Transfers</div>
<div class="w" style="left:120.5px;top:436.6px;font-size:7.9px;color:#333;">Collected fees</div>
<div class="w" style="left:120.5px;top:452.4px;font-size:7.9px;color:#333;">Settings</div>
<div class="w" style="left:112.0px;top:470.9px;font-size:8.1px;color:#333;">Orders</div>
<svg class="a" style="left:99.5px;top:469.7px" width="9" height="9" viewBox="0 0 9 9"><path d="M0.3 1 H1.6 L2.5 5.5 H6.8 L7.6 2.3 H2" stroke="#2b2b2b" stroke-width="0.9" fill="none"/><circle cx="3" cy="7.2" r="0.8" fill="#2b2b2b"/><circle cx="6.2" cy="7.2" r="0.8" fill="#2b2b2b"/></svg>
<div class="w" style="left:112.0px;top:494.7px;font-size:8.2px;color:#333;">Developers</div>
<svg class="a" style="left:99.5px;top:493.5px" width="9" height="9" viewBox="0 0 9 9"><rect x="0.3" y="1" width="8" height="6.5" rx="1" fill="#2b2b2b"/><path d="M3.2 3 L2.2 4.2 L3.2 5.4 M5.2 3 L6.2 4.2 L5.2 5.4" stroke="#fff" stroke-width="0.7" fill="none"/></svg>
<div class="w" style="left:112.0px;top:510.5px;font-size:8.3px;color:#333;">View test data</div>
<svg class="a" style="left:99.5px;top:509.4px" width="9" height="9" viewBox="0 0 9 9"><rect x="0.5" y="2" width="7.5" height="4.5" rx="2.25" stroke="#2b2b2b" stroke-width="0.9" fill="none"/><circle cx="2.8" cy="4.25" r="1.3" fill="#2b2b2b"/></svg>
<div class="w" style="left:112.0px;top:536.1px;font-size:8.5px;color:#333;">Business settings</div>
<svg class="a" style="left:99.5px;top:535.2px" width="9" height="9" viewBox="0 0 9 9"><rect x="0.5" y="1" width="7.5" height="7" rx="1.2" fill="#2b2b2b"/><path d="M0.5 3.7 H8" stroke="#fff" stroke-width="0.8"/><rect x="2" y="5" width="4.5" height="1.5" fill="#fff"/></svg>
<div class="a" style="left:249.2px;top:266.3px;width:517px;height:84px;background:#fff;border:1.4px solid #575757;"></div>
<div class="a" style="left:250.6px;top:309.5px;width:514.2px;height:39px;background:#f4f7fb"></div>
<div class="a" style="left:248px;top:356px;width:518px;height:109.7px;background:#fff;border:1.4px solid #575757;"></div>
<div class="a" style="left:248px;top:472.8px;width:518px;height:79.5px;background:#fff;border:1.4px solid #575757;"></div>
<div class="a" style="left:248px;top:559.7px;width:518px;height:134.8px;background:#fff;border:1.4px solid #575757;"></div>
<svg class="a" style="left:260.5px;top:276px" width="9" height="8" viewBox="0 0 9 8"><rect x="0.5" y="1" width="7.5" height="7" rx="1.2" fill="#2b2b2b"/><path d="M0.5 3.7 H8" stroke="#fff" stroke-width="0.8"/><rect x="2" y="5" width="4.5" height="1.5" fill="#fff"/></svg>
<div class="w" style="left:273.0px;top:277.0px;font-size:6.9px;color:#333;">Connected account</div>
<div class="a" style="left:341.2px;top:291.3px;width:47px;height:11.3px;border:1px solid #5fd39b"></div>
<div class="w" style="left:353.0px;top:294.6px;font-size:5.3px;color:#5fcf96;letter-spacing:0.15px;-webkit-text-stroke:0">VERIFIED</div>
<div class="w" style="left:260.8px;top:321.2px;font-size:7.5px;color:#333;">Payments</div>
<svg class="a" style="left:260.5px;top:332.5px" width="8.5" height="8.5" viewBox="0 0 8.5 8.5"><circle cx="4.2" cy="4.2" r="4" fill="#3cc97c"/><path d="M2.3 4.3 L3.7 5.6 L6.2 3" stroke="#fff" stroke-width="1.1" fill="none"/></svg>
<div class="w" style="left:273.0px;top:333.2px;font-size:8px;color:#333;">Enabled</div>
<div class="a" style="left:315px;top:319px;width:1.3px;height:23.5px;background:#444"></div>
<div class="w" style="left:327.8px;top:321.2px;font-size:7.5px;color:#333;">Payouts</div>
<svg class="a" style="left:327.5px;top:332.5px" width="8.5" height="8.5" viewBox="0 0 8.5 8.5"><circle cx="4.2" cy="4.2" r="4" fill="#3cc97c"/><path d="M2.3 4.3 L3.7 5.6 L6.2 3" stroke="#fff" stroke-width="1.1" fill="none"/></svg>
<div class="w" style="left:340.0px;top:333.2px;font-size:8px;color:#333;">Manual</div>
<div class="a" style="left:380px;top:319px;width:1.3px;height:23.5px;background:#444"></div>
<div class="w" style="left:393.0px;top:321.2px;font-size:7.5px;color:#333;">Total balance</div>
<div class="w" style="left:393.0px;top:333.2px;font-size:8px;color:#333;">$150.00 USD</div>
<div class="a" style="left:443.7px;top:332.5px;width:8px;height:8.3px;border:0.9px solid #777;background:#fff"></div><div class="w" style="left:446.6px;top:333.6px;font-size:5.5px;color:#555">i</div>
<div class="a" style="left:465px;top:319px;width:1.3px;height:23.5px;background:#444"></div>
<div class="w" style="left:477.5px;top:321.2px;font-size:7.5px;color:#333;">Lifetime volume</div>
<div class="w" style="left:477.5px;top:333.3px;font-size:7.9px;color:#333;">$ 5550.00 USD</div>
<div class="a" style="left:536.7px;top:332.5px;width:8px;height:8.3px;border:0.9px solid #777;background:#fff"></div><div class="w" style="left:539.6px;top:333.6px;font-size:5.5px;color:#555">i</div>
<div class="a" style="left:737px;top:287.5px;width:16.3px;height:16.2px;border:1px solid #555;background:#fff;border-radius:1px"></div>
<svg class="a" style="left:739px;top:294px" width="12" height="3" viewBox="0 0 12 3"><circle cx="2.8" cy="1.5" r="1.2" fill="#222"/><circle cx="6.1" cy="1.5" r="1.2" fill="#222"/><circle cx="9.4" cy="1.5" r="1.2" fill="#222"/></svg>
<div class="a" style="left:718.3px;top:362.5px;width:36.4px;height:15.5px;border:1.2px solid #333;border-radius:3px;background:#fff;box-shadow:1px 1px 0 rgba(0,0,0,0.15)"></div>
<svg class="a" style="left:725px;top:365.5px" width="9" height="9" viewBox="0 0 9 9"><path d="M1 8 L1.5 6 L6 1.5 L7.5 3 L3 7.5 Z" fill="#222"/></svg>
<div class="w" style="left:735.5px;top:368.0px;font-size:6.3px;color:#333;">Edit</div>
<div class="a" style="left:257px;top:388px;width:497.7px;height:1.3px;background:#444"></div>
<div class="w" style="left:260.8px;top:399.8px;font-size:8px;color:#333;">Name</div>
<div class="w" style="left:260.8px;top:415.7px;font-size:8px;color:#333;">Date of birth</div>
<div class="w" style="left:260.8px;top:432.3px;font-size:8px;color:#333;">SSN</div>
<div class="w" style="left:260.8px;top:448.7px;font-size:8px;color:#333;">Identity document</div>
<div class="w" style="left:508.0px;top:400.1px;font-size:7.7px;color:#333;">Email address</div>
<div class="w" style="left:508.0px;top:416.0px;font-size:7.7px;color:#333;">Phone number</div>
<div class="w" style="left:508.0px;top:432.3px;font-size:7.7px;color:#333;">Address</div>
<div class="a" style="left:597px;top:396.7px;width:98.3px;height:11.6px;border:1.2px solid #7fa6f2"></div>
<div class="a" style="left:595.7px;top:395.4px;width:3.8px;height:3.8px;border-radius:1px;border:0.9px solid #7fa6f2;background:#fff"></div>
<div class="a" style="left:595.7px;top:400.6px;width:3.8px;height:3.8px;border-radius:1px;border:0.9px solid #7fa6f2;background:#fff"></div>
<div class="a" style="left:595.7px;top:405.8px;width:3.8px;height:3.8px;border-radius:1px;border:0.9px solid #7fa6f2;background:#fff"></div>
<div class="a" style="left:644.3px;top:395.4px;width:3.8px;height:3.8px;border-radius:1px;border:0.9px solid #7fa6f2;background:#fff"></div>
<div class="a" style="left:644.3px;top:405.8px;width:3.8px;height:3.8px;border-radius:1px;border:0.9px solid #7fa6f2;background:#fff"></div>
<div class="a" style="left:692.8px;top:395.4px;width:3.8px;height:3.8px;border-radius:1px;border:0.9px solid #7fa6f2;background:#fff"></div>
<div class="a" style="left:692.8px;top:400.6px;width:3.8px;height:3.8px;border-radius:1px;border:0.9px solid #7fa6f2;background:#fff"></div>
<div class="a" style="left:692.8px;top:405.8px;width:3.8px;height:3.8px;border-radius:1px;border:0.9px solid #7fa6f2;background:#fff"></div>
<div class="a" style="left:667px;top:480px;width:63px;height:15.5px;border:1.2px solid #333;border-radius:3px;background:#fff;box-shadow:1px 1px 0 rgba(0,0,0,0.15)"></div>
<svg class="a" style="left:676px;top:483.5px" width="9" height="9" viewBox="0 0 9 9"><path d="M2.5 8 V1.5 M0.8 3.2 L2.5 1.3 L4.2 3.2 M6.5 1 V7.5 M4.8 5.8 L6.5 7.7 L8.2 5.8" stroke="#222" stroke-width="1.1" fill="none"/></svg>
<div class="w" style="left:686.3px;top:485.7px;font-size:6.6px;color:#333;">Send funds</div>
<div class="a" style="left:739.2px;top:480px;width:15.8px;height:16.2px;border:1px solid #555;background:#fff;border-radius:1px"></div>
<svg class="a" style="left:741px;top:486.5px" width="12" height="3" viewBox="0 0 12 3"><circle cx="2.8" cy="1.5" r="1.2" fill="#222"/><circle cx="6.1" cy="1.5" r="1.2" fill="#222"/><circle cx="9.4" cy="1.5" r="1.2" fill="#222"/></svg>
<div class="a" style="left:254px;top:505.6px;width:497.3px;height:1.3px;background:#444"></div>
<div class="w" style="left:261.0px;top:517.0px;font-size:7.5px;color:#333;">Total balance</div>
<div class="w" style="left:261.5px;top:531.7px;font-size:9.2px;color:#333;">$300.00</div>
<div class="w" style="left:353.0px;top:517.0px;font-size:7.5px;color:#333;">Available to pay out</div>
<div class="w" style="left:353.5px;top:531.7px;font-size:9.2px;color:#333;">$100.00</div>
<div class="w" style="left:445.8px;top:517.0px;font-size:7.5px;color:#333;">Available soon</div>
<div class="w" style="left:446.3px;top:531.7px;font-size:9.2px;color:#333;">$130.00</div>
<div class="w" style="left:536.9px;top:517.0px;font-size:7.5px;color:#333;">In transit to bank</div>
<div class="w" style="left:537.4px;top:531.7px;font-size:9.2px;color:#333;">$70.00</div>
<div class="a" style="left:254px;top:588.2px;width:497.3px;height:1.3px;background:#444"></div>
<div class="a" style="left:257.2px;top:600px;width:213.6px;height:14.7px;border:1.2px solid #444;border-radius:3.5px;background:#fff;overflow:hidden"><div class="a" style="left:0;top:0;width:50px;height:14px;background:#8fb6ee"></div></div>
<div class="a" style="left:308px;top:600px;width:1.2px;height:14.7px;background:#444"></div>
<div class="a" style="left:357px;top:600px;width:1.2px;height:14.7px;background:#444"></div>
<div class="a" style="left:400px;top:600px;width:1.2px;height:14.7px;background:#444"></div>
<div class="w" style="left:263.8px;top:602.7px;font-size:8.6px;color:#2b2b2b;">Payments</div>
<div class="w" style="left:314.5px;top:602.7px;font-size:8.6px;color:#2b2b2b;">Transfers</div>
<div class="w" style="left:364.3px;top:602.7px;font-size:8.6px;color:#2b2b2b;">Payouts</div>
<div class="w" style="left:407.8px;top:602.7px;font-size:8.6px;color:#2b2b2b;">Collected fees</div>
<div class="a" style="left:258.3px;top:624.2px;width:496.4px;height:57.5px;background:#fff;border:1.2px solid #444"></div>
<div class="a" style="left:259.5px;top:625.4px;width:494px;height:8px;background:#cdcdcd;border-bottom:1.1px solid #444"></div>
<div class="a" style="left:259.5px;top:634.4px;width:494px;height:14px;background:#eeeeee"></div>
<div class="a" style="left:259.5px;top:663.8px;width:494px;height:14.5px;background:#eeeeee"></div>
<div class="a" style="left:334px;top:624.5px;width:1.3px;height:57px;background:#444"></div>
<div class="a" style="left:408px;top:624.5px;width:1.3px;height:57px;background:#444"></div>
<div class="a" style="left:603px;top:624.5px;width:1.3px;height:57px;background:#444"></div>
<div class="a" style="left:677px;top:624.5px;width:1.3px;height:57px;background:#444"></div>
<div class="w" style="left:262.2px;top:626.4px;font-size:6.4px;color:#333;">AMOUNT</div>
<div class="w" style="left:335.3px;top:626.4px;font-size:6.4px;color:#333;">BANK ACCOUNT</div>
<div class="w" style="left:409.0px;top:626.4px;font-size:6.4px;color:#333;">ESTIMATED ARRIVAL</div>
<div class="w" style="left:604.7px;top:626.4px;font-size:6.4px;color:#333;">ID</div>
<div class="w" style="left:678.0px;top:626.4px;font-size:6.4px;color:#333;">DATE INITIATED</div>
<div class="w" style="left:262.2px;top:638.2px;font-size:6.6px;color:#333;">$50.00</div>
<div class="w" style="left:337.5px;top:638.3px;font-size:6.5px;color:#333;">USD Rabobank .... 741</div>
<div class="w" style="left:411.0px;top:638.2px;font-size:6.6px;color:#333;">Expected on Jun 15 2018</div>
<div class="w" style="left:606.3px;top:637.8px;font-size:7.1px;color:#333;">po_34243534523535</div>
<div class="w" style="left:680.0px;top:638.2px;font-size:6.6px;color:#333;">Jun 13 2018 3:45 PM</div>
<div class="w" style="left:262.2px;top:653.5px;font-size:6.6px;color:#333;">$67.00</div>
<div class="w" style="left:337.5px;top:653.6px;font-size:6.5px;color:#333;">USD Unicredit .... 7412</div>
<div class="w" style="left:411.0px;top:653.5px;font-size:6.6px;color:#333;">Expected on Jun 18 2018</div>
<div class="w" style="left:606.3px;top:653.1px;font-size:7.1px;color:#333;">po_34243532222215</div>
<div class="w" style="left:680.0px;top:653.5px;font-size:6.6px;color:#333;">Jun 13 2018 3:45 PM</div>
<div class="w" style="left:262.2px;top:668.5px;font-size:6.6px;color:#333;">$150.00</div>
<div class="w" style="left:337.5px;top:668.6px;font-size:6.5px;color:#333;">USD Unicredit .... 7412</div>
<div class="w" style="left:411.0px;top:668.5px;font-size:6.6px;color:#333;">Expected on Jun 20 2018</div>
<div class="w" style="left:606.3px;top:668.1px;font-size:7.1px;color:#333;">po_13434444523537</div>
<div class="w" style="left:680.0px;top:668.5px;font-size:6.6px;color:#333;">Jun 13 2018 3:45 PM</div>
<svg class="a" style="left:0;top:0" width="1200" height="757" viewBox="0 0 1200 757"><path d="M120.0 246.5 L123.3 242.4 Q124.4 240.9 124.6 242.8 L124.8 246.5 L127.9 242.4 Q129.0 240.9 129.2 242.8 L129.4 246.5 L132.5 242.4 Q133.6 240.9 133.8 242.8 L134.0 246.5 L137.1 242.4 Q138.2 240.9 138.4 242.8 L138.6 246.5 L141.7 242.4 Q142.8 240.9 143.0 242.8 L143.2 246.5 L146.3 242.4 Q147.4 240.9 147.6 242.8 L147.8 246.5 L150.9 242.4 Q152.0 240.9 152.2 242.8 L152.4 246.5 L155.5 242.4 Q156.6 240.9 156.8 242.8 L157.0 246.5 L160.1 242.4 Q161.2 240.9 161.4 242.8 L161.6 246.5 L164.0 243.7" stroke="#3a3a3a" stroke-width="1.15" fill="none" stroke-linejoin="round" stroke-linecap="round"/><circle cx="167.5" cy="247.0" r="0.6" fill="#555"/><path d="M658.5 282.5 L661.8 278.4 Q662.9 276.9 663.1 278.8 L663.4 282.5 L666.4 278.4 Q667.5 276.9 667.7 278.8 L668.0 282.5 L671.0 278.4 Q672.1 276.9 672.3 278.8 L672.6 282.5 L675.6 278.4 Q676.7 276.9 676.9 278.8 L677.2 282.5 L680.2 278.4 Q681.3 276.9 681.5 278.8 L681.8 282.5 L684.8 278.4 Q685.9 276.9 686.1 278.8 L686.4 282.5 L689.4 278.4 Q690.5 276.9 690.7 278.8 L691.0 282.5 L694.0 278.4 Q695.1 276.9 695.3 278.8 L695.6 282.5 L698.6 278.4 Q699.7 276.9 699.9 278.8 L700.2 282.5 L703.0 279.1" stroke="#3a3a3a" stroke-width="1.15" fill="none" stroke-linejoin="round" stroke-linecap="round"/><path d="M707.0 282.5 L710.3 278.4 Q711.4 276.9 711.6 278.8 L711.9 282.5 L714.9 278.4 Q716.0 276.9 716.2 278.8 L716.5 282.5 L719.5 278.4 Q720.6 276.9 720.8 278.8 L721.1 282.5 L724.1 278.4 Q725.2 276.9 725.4 278.8 L725.7 282.5 L729.0 278.6" stroke="#3a3a3a" stroke-width="1.15" fill="none" stroke-linejoin="round" stroke-linecap="round"/><path d="M732.5 282.5 L735.8 278.4 Q736.9 276.9 737.1 278.8 L737.4 282.5 L740.4 278.4 Q741.5 276.9 741.7 278.8 L742.0 282.5 L745.0 278.4 Q746.1 276.9 746.3 278.8 L746.6 282.5 L749.6 278.4 Q750.7 276.9 750.9 278.8 L751.2 282.5" stroke="#3a3a3a" stroke-width="1.15" fill="none" stroke-linejoin="round" stroke-linecap="round"/><circle cx="755.5" cy="283.0" r="0.6" fill="#555"/><path d="M260.5 299.9 L264.7 295.0 Q265.8 293.5 266.0 295.4 L266.2 299.9 L270.2 295.0 Q271.3 293.5 271.5 295.4 L271.8 299.9 L275.7 295.0 Q276.8 293.5 277.0 295.4 L277.2 299.9 L281.2 295.0 Q282.3 293.5 282.5 295.4 L282.8 299.9 L286.7 295.0 Q287.8 293.5 288.0 295.4 L288.2 299.9 L292.2 295.0 Q293.3 293.5 293.5 295.4 L293.8 299.9 L297.7 295.0 Q298.8 293.5 299.0 295.4 L299.2 299.9 L303.2 295.0 Q304.3 293.5 304.5 295.4 L304.8 299.9 L308.7 295.0 Q309.8 293.5 310.0 295.4 L310.2 299.9 L314.2 295.0 Q315.3 293.5 315.5 295.4 L315.8 299.9 L319.5 295.7" stroke="#3a3a3a" stroke-width="1.15" fill="none" stroke-linejoin="round" stroke-linecap="round"/><path d="M323.5 299.9 L327.7 295.0 Q328.8 293.5 329.0 295.4 L329.2 299.9 L335.0 293.6" stroke="#3a3a3a" stroke-width="1.15" fill="none" stroke-linejoin="round" stroke-linecap="round"/><path d="M260.0 374.9 L264.2 370.0 Q265.3 368.5 265.5 370.4 L265.8 374.9 L269.7 370.0 Q270.8 368.5 271.0 370.4 L271.2 374.9 L275.2 370.0 Q276.3 368.5 276.5 370.4 L276.8 374.9 L280.7 370.0 Q281.8 368.5 282.0 370.4 L282.2 374.9 L286.2 370.0 Q287.3 368.5 287.5 370.4 L287.8 374.9 L291.7 370.0 Q292.8 368.5 293.0 370.4 L293.2 374.9 L297.2 370.0 Q298.3 368.5 298.5 370.4 L298.8 374.9 L302.7 370.0 Q303.8 368.5 304.0 370.4 L304.2 374.9 L308.2 370.0 Q309.3 368.5 309.5 370.4 L309.8 374.9 L313.7 370.0 Q314.8 368.5 315.0 370.4 L315.2 374.9 L319.5 370.2" stroke="#3a3a3a" stroke-width="1.15" fill="none" stroke-linejoin="round" stroke-linecap="round"/><circle cx="323.3" cy="375.0" r="0.6" fill="#555"/><path d="M352.5 405.9 L356.7 401.0 Q357.8 399.5 358.0 401.4 L358.2 405.9 L362.2 401.0 Q363.3 399.5 363.5 401.4 L363.8 405.9 L367.7 401.0 Q368.8 399.5 369.0 401.4 L369.2 405.9 L373.2 401.0 Q374.3 399.5 374.5 401.4 L374.8 405.9 L378.7 401.0 Q379.8 399.5 380.0 401.4 L380.2 405.9 L384.2 401.0 Q385.3 399.5 385.5 401.4 L385.8 405.9 L389.7 401.0 Q390.8 399.5 391.0 401.4 L391.2 405.9 L395.2 401.0 Q396.3 399.5 396.5 401.4 L396.8 405.9 L400.7 401.0 Q401.8 399.5 402.0 401.4 L402.2 405.9 L406.2 401.0 Q407.3 399.5 407.5 401.4 L407.8 405.9 L411.5 401.7" stroke="#3a3a3a" stroke-width="1.15" fill="none" stroke-linejoin="round" stroke-linecap="round"/><circle cx="415.5" cy="406.0" r="0.6" fill="#555"/><path d="M352.5 422.9 L356.7 418.0 Q357.8 416.5 358.0 418.4 L358.2 422.9 L362.2 418.0 Q363.3 416.5 363.5 418.4 L363.8 422.9 L367.7 418.0 Q368.8 416.5 369.0 418.4 L369.2 422.9 L373.2 418.0 Q374.3 416.5 374.5 418.4 L374.8 422.9 L378.7 418.0 Q379.8 416.5 380.0 418.4 L380.2 422.9 L384.2 418.0 Q385.3 416.5 385.5 418.4 L385.8 422.9 L389.7 418.0 Q390.8 416.5 391.0 418.4 L391.2 422.9 L395.2 418.0 Q396.3 416.5 396.5 418.4 L396.8 422.9" stroke="#3a3a3a" stroke-width="1.15" fill="none" stroke-linejoin="round" stroke-linecap="round"/><path d="M352.5 437.9 L356.7 433.0 Q357.8 431.5 358.0 433.4 L358.2 437.9 L362.2 433.0 Q363.3 431.5 363.5 433.4 L363.8 437.9 L367.7 433.0 Q368.8 431.5 369.0 433.4 L369.2 437.9 L373.2 433.0 Q374.3 431.5 374.5 433.4 L374.8 437.9 L378.7 433.0 Q379.8 431.5 380.0 433.4 L380.2 437.9 L383.0 434.7" stroke="#3a3a3a" stroke-width="1.15" fill="none" stroke-linejoin="round" stroke-linecap="round"/><path d="M352.5 453.9 L356.7 449.0 Q357.8 447.5 358.0 449.4 L358.2 453.9 L362.2 449.0 Q363.3 447.5 363.5 449.4 L363.8 453.9 L367.7 449.0 Q368.8 447.5 369.0 449.4 L369.2 453.9 L373.2 449.0 Q374.3 447.5 374.5 449.4 L374.8 453.9 L378.7 449.0 Q379.8 447.5 380.0 449.4 L380.2 453.9 L384.2 449.0 Q385.3 447.5 385.5 449.4 L385.8 453.9 L389.7 449.0 Q390.8 447.5 391.0 449.4 L391.2 453.9 L395.2 449.0 Q396.3 447.5 396.5 449.4 L396.8 453.9" stroke="#3a3a3a" stroke-width="1.15" fill="none" stroke-linejoin="round" stroke-linecap="round"/><path d="M600.0 405.4 L604.2 400.5 Q605.3 399.0 605.5 400.9 L605.8 405.4 L609.7 400.5 Q610.8 399.0 611.0 400.9 L611.2 405.4 L615.2 400.5 Q616.3 399.0 616.5 400.9 L616.8 405.4 L620.7 400.5 Q621.8 399.0 622.0 400.9 L622.2 405.4 L626.2 400.5 Q627.3 399.0 627.5 400.9 L627.8 405.4 L631.7 400.5 Q632.8 399.0 633.0 400.9 L633.2 405.4 L637.2 400.5 Q638.3 399.0 638.5 400.9 L638.8 405.4 L642.7 400.5 Q643.8 399.0 644.0 400.9 L644.2 405.4 L648.2 400.5 Q649.3 399.0 649.5 400.9 L649.8 405.4 L653.7 400.5 Q654.8 399.0 655.0 400.9 L655.2 405.4 L659.0 401.2" stroke="#3a3a3a" stroke-width="1.15" fill="none" stroke-linejoin="round" stroke-linecap="round"/><path d="M663.0 405.4 L667.2 400.5 Q668.3 399.0 668.5 400.9 L668.8 405.4 L672.7 400.5 Q673.8 399.0 674.0 400.9 L674.2 405.4 L678.2 400.5 Q679.3 399.0 679.5 400.9 L679.8 405.4 L683.7 400.5 Q684.8 399.0 685.0 400.9 L685.2 405.4 L689.2 400.5 Q690.3 399.0 690.5 400.9 L690.8 405.4" stroke="#3a3a3a" stroke-width="1.15" fill="none" stroke-linejoin="round" stroke-linecap="round"/><path d="M600.0 422.4 L604.2 417.5 Q605.3 416.0 605.5 417.9 L605.8 422.4 L609.7 417.5 Q610.8 416.0 611.0 417.9 L611.2 422.4 L615.2 417.5 Q616.3 416.0 616.5 417.9 L616.8 422.4 L620.7 417.5 Q621.8 416.0 622.0 417.9 L622.2 422.4 L626.2 417.5 Q627.3 416.0 627.5 417.9 L627.8 422.4 L631.7 417.5 Q632.8 416.0 633.0 417.9 L633.2 422.4 L637.2 417.5 Q638.3 416.0 638.5 417.9 L638.8 422.4 L644.7 415.9" stroke="#3a3a3a" stroke-width="1.15" fill="none" stroke-linejoin="round" stroke-linecap="round"/><path d="M600.0 438.4 L604.2 433.5 Q605.3 432.0 605.5 433.9 L605.8 438.4 L609.7 433.5 Q610.8 432.0 611.0 433.9 L611.2 438.4 L615.2 433.5 Q616.3 432.0 616.5 433.9 L616.8 438.4 L620.7 433.5 Q621.8 432.0 622.0 433.9 L622.2 438.4 L626.2 433.5 Q627.3 432.0 627.5 433.9 L627.8 438.4 L631.7 433.5 Q632.8 432.0 633.0 433.9 L633.2 438.4 L637.2 433.5 Q638.3 432.0 638.5 433.9 L638.8 438.4 L642.7 433.5 Q643.8 432.0 644.0 433.9 L644.2 438.4 L648.2 433.5 Q649.3 432.0 649.5 433.9 L649.8 438.4 L653.7 433.5 Q654.8 432.0 655.0 433.9 L655.2 438.4 L659.0 434.2" stroke="#3a3a3a" stroke-width="1.15" fill="none" stroke-linejoin="round" stroke-linecap="round"/><path d="M663.0 438.4 L667.2 433.5 Q668.3 432.0 668.5 433.9 L668.8 438.4 L672.7 433.5 Q673.8 432.0 674.0 433.9 L674.2 438.4 L678.2 433.5 Q679.3 432.0 679.5 433.9 L679.8 438.4 L681.3 436.5" stroke="#3a3a3a" stroke-width="1.15" fill="none" stroke-linejoin="round" stroke-linecap="round"/><path d="M600.0 454.2 L604.2 449.3 Q605.3 447.8 605.5 449.7 L605.8 454.2 L609.7 449.3 Q610.8 447.8 611.0 449.7 L611.2 454.2 L615.2 449.3 Q616.3 447.8 616.5 449.7 L616.8 454.2 L620.7 449.3 Q621.8 447.8 622.0 449.7 L622.2 454.2 L626.2 449.3 Q627.3 447.8 627.5 449.7 L627.8 454.2 L631.7 449.3 Q632.8 447.8 633.0 449.7 L633.2 454.2 L637.2 449.3 Q638.3 447.8 638.5 449.7 L638.8 454.2 L642.7 449.3 Q643.8 447.8 644.0 449.7 L644.2 454.2 L648.2 449.3 Q649.3 447.8 649.5 449.7 L649.8 454.2 L653.7 449.3 Q654.8 447.8 655.0 449.7 L655.2 454.2 L659.0 450.0" stroke="#3a3a3a" stroke-width="1.15" fill="none" stroke-linejoin="round" stroke-linecap="round"/><path d="M662.0 454.2 L666.2 449.3 Q667.3 447.8 667.5 449.7 L667.8 454.2 L671.7 449.3 Q672.8 447.8 673.0 449.7 L673.2 454.2 L677.2 449.3 Q678.3 447.8 678.5 449.7 L678.8 454.2 L682.7 449.3 Q683.8 447.8 684.0 449.7 L684.2 454.2 L689.0 448.9" stroke="#3a3a3a" stroke-width="1.15" fill="none" stroke-linejoin="round" stroke-linecap="round"/><path d="M695.0 454.2 L699.2 449.3 Q700.3 447.8 700.5 449.7 L700.8 454.2 L703.0 451.6" stroke="#3a3a3a" stroke-width="1.15" fill="none" stroke-linejoin="round" stroke-linecap="round"/><path d="M258.5 492.9 L262.7 488.0 Q263.8 486.5 264.0 488.4 L264.2 492.9 L268.2 488.0 Q269.3 486.5 269.5 488.4 L269.8 492.9 L273.7 488.0 Q274.8 486.5 275.0 488.4 L275.2 492.9 L279.2 488.0 Q280.3 486.5 280.5 488.4 L280.8 492.9 L284.7 488.0 Q285.8 486.5 286.0 488.4 L286.2 492.9 L290.2 488.0 Q291.3 486.5 291.5 488.4 L291.8 492.9 L295.7 488.0 Q296.8 486.5 297.0 488.4 L297.2 492.9 L301.2 488.0 Q302.3 486.5 302.5 488.4 L302.8 492.9 L306.7 488.0 Q307.8 486.5 308.0 488.4 L308.2 492.9 L312.2 488.0 Q313.3 486.5 313.5 488.4 L313.8 492.9 L317.5 488.7" stroke="#3a3a3a" stroke-width="1.15" fill="none" stroke-linejoin="round" stroke-linecap="round"/><circle cx="321.3" cy="493.0" r="0.6" fill="#555"/><path d="M257.0 576.9 L261.2 572.0 Q262.3 570.5 262.5 572.4 L262.8 576.9 L266.7 572.0 Q267.8 570.5 268.0 572.4 L268.2 576.9 L272.2 572.0 Q273.3 570.5 273.5 572.4 L273.8 576.9 L277.7 572.0 Q278.8 570.5 279.0 572.4 L279.2 576.9 L283.2 572.0 Q284.3 570.5 284.5 572.4 L284.8 576.9 L288.7 572.0 Q289.8 570.5 290.0 572.4 L290.2 576.9 L292.0 574.8" stroke="#3a3a3a" stroke-width="1.15" fill="none" stroke-linejoin="round" stroke-linecap="round"/></svg>
<!-- /WIREFRAME -->
</div><!--/root--></body></html>
